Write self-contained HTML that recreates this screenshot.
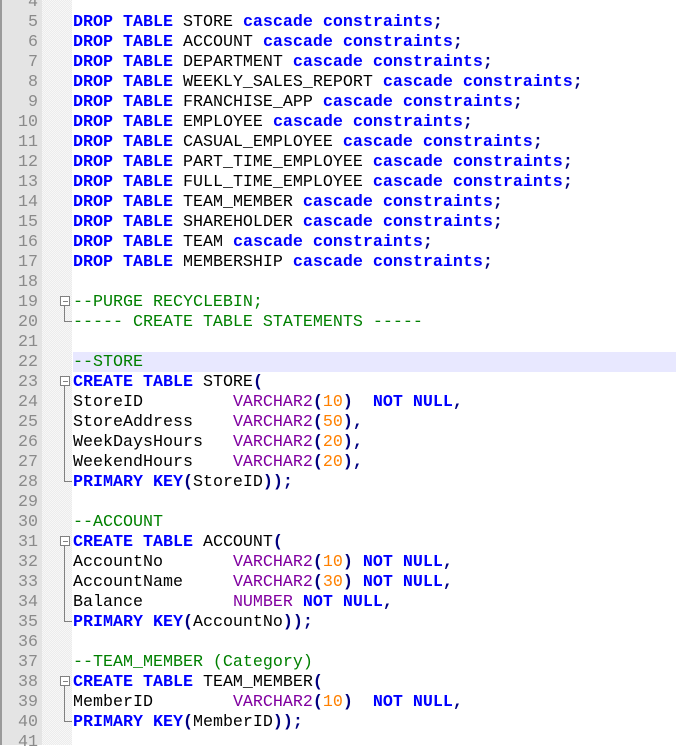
<!DOCTYPE html>
<html><head><meta charset="utf-8"><style>
html,body{margin:0;padding:0;width:676px;height:745px;overflow:hidden;background:#fff}
#ln{position:absolute;left:0;top:0;width:42px;height:745px;background:#e4e4e4;border-left:2px solid #9a9a9a;box-sizing:border-box}
#fold{position:absolute;left:42px;top:0;width:30px;height:745px;background-color:#f7f7f7;background-image:linear-gradient(45deg,#ececec 25%,transparent 25%,transparent 75%,#ececec 75%),linear-gradient(45deg,#ececec 25%,transparent 25%,transparent 75%,#ececec 75%);background-size:2px 2px;background-position:0 0,1px 1px}
.l{position:absolute;left:0;height:20px;line-height:20px;margin-top:2px;font-family:"Liberation Mono",monospace;font-size:16.67px;white-space:pre;color:#000}
.n{width:38px;text-align:right;color:#8a8a8a}
.t{left:73px}
.k{color:#0000ff;font-weight:bold}
.c{color:#008000}
.y{color:#8000a0}
.d{color:#ff8000}
.p{color:#000080;font-weight:bold}
.box{position:absolute;left:60px;width:8px;height:8px;border:1px solid #808080;background:#fff}
.box:after{content:"";position:absolute;left:2px;top:4px;width:5px;height:1px;background:#808080}
.vl{position:absolute;left:64px;width:1px;background:#808080}
.end{position:absolute;left:64px;width:8px;height:1px;background:#808080}
</style></head><body>
<div id="ln"></div><div id="fold"></div>
<div style="position:absolute;left:73px;top:352px;width:603px;height:20px;background:#e8e8ff"></div>
<div class="box" style="top:296px"></div><div class="vl" style="top:306px;height:15px"></div><div class="end" style="top:321px"></div>
<div class="box" style="top:376px"></div><div class="vl" style="top:386px;height:95px"></div><div class="end" style="top:481px"></div>
<div class="box" style="top:536px"></div><div class="vl" style="top:546px;height:75px"></div><div class="end" style="top:621px"></div>
<div class="box" style="top:676px"></div><div class="vl" style="top:686px;height:35px"></div><div class="end" style="top:721px"></div>

<div class="l n" style="top:-9px">4</div>
<div class="l n" style="top:11px">5</div>
<div class="l n" style="top:31px">6</div>
<div class="l n" style="top:51px">7</div>
<div class="l n" style="top:71px">8</div>
<div class="l n" style="top:91px">9</div>
<div class="l n" style="top:111px">10</div>
<div class="l n" style="top:131px">11</div>
<div class="l n" style="top:151px">12</div>
<div class="l n" style="top:171px">13</div>
<div class="l n" style="top:191px">14</div>
<div class="l n" style="top:211px">15</div>
<div class="l n" style="top:231px">16</div>
<div class="l n" style="top:251px">17</div>
<div class="l n" style="top:271px">18</div>
<div class="l n" style="top:291px">19</div>
<div class="l n" style="top:311px">20</div>
<div class="l n" style="top:331px">21</div>
<div class="l n" style="top:351px">22</div>
<div class="l n" style="top:371px">23</div>
<div class="l n" style="top:391px">24</div>
<div class="l n" style="top:411px">25</div>
<div class="l n" style="top:431px">26</div>
<div class="l n" style="top:451px">27</div>
<div class="l n" style="top:471px">28</div>
<div class="l n" style="top:491px">29</div>
<div class="l n" style="top:511px">30</div>
<div class="l n" style="top:531px">31</div>
<div class="l n" style="top:551px">32</div>
<div class="l n" style="top:571px">33</div>
<div class="l n" style="top:591px">34</div>
<div class="l n" style="top:611px">35</div>
<div class="l n" style="top:631px">36</div>
<div class="l n" style="top:651px">37</div>
<div class="l n" style="top:671px">38</div>
<div class="l n" style="top:691px">39</div>
<div class="l n" style="top:711px">40</div>
<div class="l n" style="top:731px">41</div>

<div class="l t" style="top:11px"><span class="k">DROP TABLE</span> STORE <span class="k">cascade constraints</span><span class="p">;</span></div>
<div class="l t" style="top:31px"><span class="k">DROP TABLE</span> ACCOUNT <span class="k">cascade constraints</span><span class="p">;</span></div>
<div class="l t" style="top:51px"><span class="k">DROP TABLE</span> DEPARTMENT <span class="k">cascade constraints</span><span class="p">;</span></div>
<div class="l t" style="top:71px"><span class="k">DROP TABLE</span> WEEKLY_SALES_REPORT <span class="k">cascade constraints</span><span class="p">;</span></div>
<div class="l t" style="top:91px"><span class="k">DROP TABLE</span> FRANCHISE_APP <span class="k">cascade constraints</span><span class="p">;</span></div>
<div class="l t" style="top:111px"><span class="k">DROP TABLE</span> EMPLOYEE <span class="k">cascade constraints</span><span class="p">;</span></div>
<div class="l t" style="top:131px"><span class="k">DROP TABLE</span> CASUAL_EMPLOYEE <span class="k">cascade constraints</span><span class="p">;</span></div>
<div class="l t" style="top:151px"><span class="k">DROP TABLE</span> PART_TIME_EMPLOYEE <span class="k">cascade constraints</span><span class="p">;</span></div>
<div class="l t" style="top:171px"><span class="k">DROP TABLE</span> FULL_TIME_EMPLOYEE <span class="k">cascade constraints</span><span class="p">;</span></div>
<div class="l t" style="top:191px"><span class="k">DROP TABLE</span> TEAM_MEMBER <span class="k">cascade constraints</span><span class="p">;</span></div>
<div class="l t" style="top:211px"><span class="k">DROP TABLE</span> SHAREHOLDER <span class="k">cascade constraints</span><span class="p">;</span></div>
<div class="l t" style="top:231px"><span class="k">DROP TABLE</span> TEAM <span class="k">cascade constraints</span><span class="p">;</span></div>
<div class="l t" style="top:251px"><span class="k">DROP TABLE</span> MEMBERSHIP <span class="k">cascade constraints</span><span class="p">;</span></div>
<div class="l t c" style="top:291px">--PURGE RECYCLEBIN;</div>
<div class="l t c" style="top:311px">----- CREATE TABLE STATEMENTS -----</div>
<div class="l t c" style="top:351px">--STORE</div>
<div class="l t" style="top:371px"><span class="k">CREATE TABLE</span> STORE<span class="p">(</span></div>
<div class="l t" style="top:391px">StoreID         <span class="y">VARCHAR2</span><span class="p">(</span><span class="d">10</span><span class="p">)</span>  <span class="k">NOT NULL</span><span class="p">,</span></div>
<div class="l t" style="top:411px">StoreAddress    <span class="y">VARCHAR2</span><span class="p">(</span><span class="d">50</span><span class="p">),</span></div>
<div class="l t" style="top:431px">WeekDaysHours   <span class="y">VARCHAR2</span><span class="p">(</span><span class="d">20</span><span class="p">),</span></div>
<div class="l t" style="top:451px">WeekendHours    <span class="y">VARCHAR2</span><span class="p">(</span><span class="d">20</span><span class="p">),</span></div>
<div class="l t" style="top:471px"><span class="k">PRIMARY KEY</span><span class="p">(</span>StoreID<span class="p">));</span></div>
<div class="l t c" style="top:511px">--ACCOUNT</div>
<div class="l t" style="top:531px"><span class="k">CREATE TABLE</span> ACCOUNT<span class="p">(</span></div>
<div class="l t" style="top:551px">AccountNo       <span class="y">VARCHAR2</span><span class="p">(</span><span class="d">10</span><span class="p">)</span> <span class="k">NOT NULL</span><span class="p">,</span></div>
<div class="l t" style="top:571px">AccountName     <span class="y">VARCHAR2</span><span class="p">(</span><span class="d">30</span><span class="p">)</span> <span class="k">NOT NULL</span><span class="p">,</span></div>
<div class="l t" style="top:591px">Balance         <span class="y">NUMBER</span> <span class="k">NOT NULL</span><span class="p">,</span></div>
<div class="l t" style="top:611px"><span class="k">PRIMARY KEY</span><span class="p">(</span>AccountNo<span class="p">));</span></div>
<div class="l t c" style="top:651px">--TEAM_MEMBER (Category)</div>
<div class="l t" style="top:671px"><span class="k">CREATE TABLE</span> TEAM_MEMBER<span class="p">(</span></div>
<div class="l t" style="top:691px">MemberID        <span class="y">VARCHAR2</span><span class="p">(</span><span class="d">10</span><span class="p">)</span>  <span class="k">NOT NULL</span><span class="p">,</span></div>
<div class="l t" style="top:711px"><span class="k">PRIMARY KEY</span><span class="p">(</span>MemberID<span class="p">));</span></div>
</body></html>
